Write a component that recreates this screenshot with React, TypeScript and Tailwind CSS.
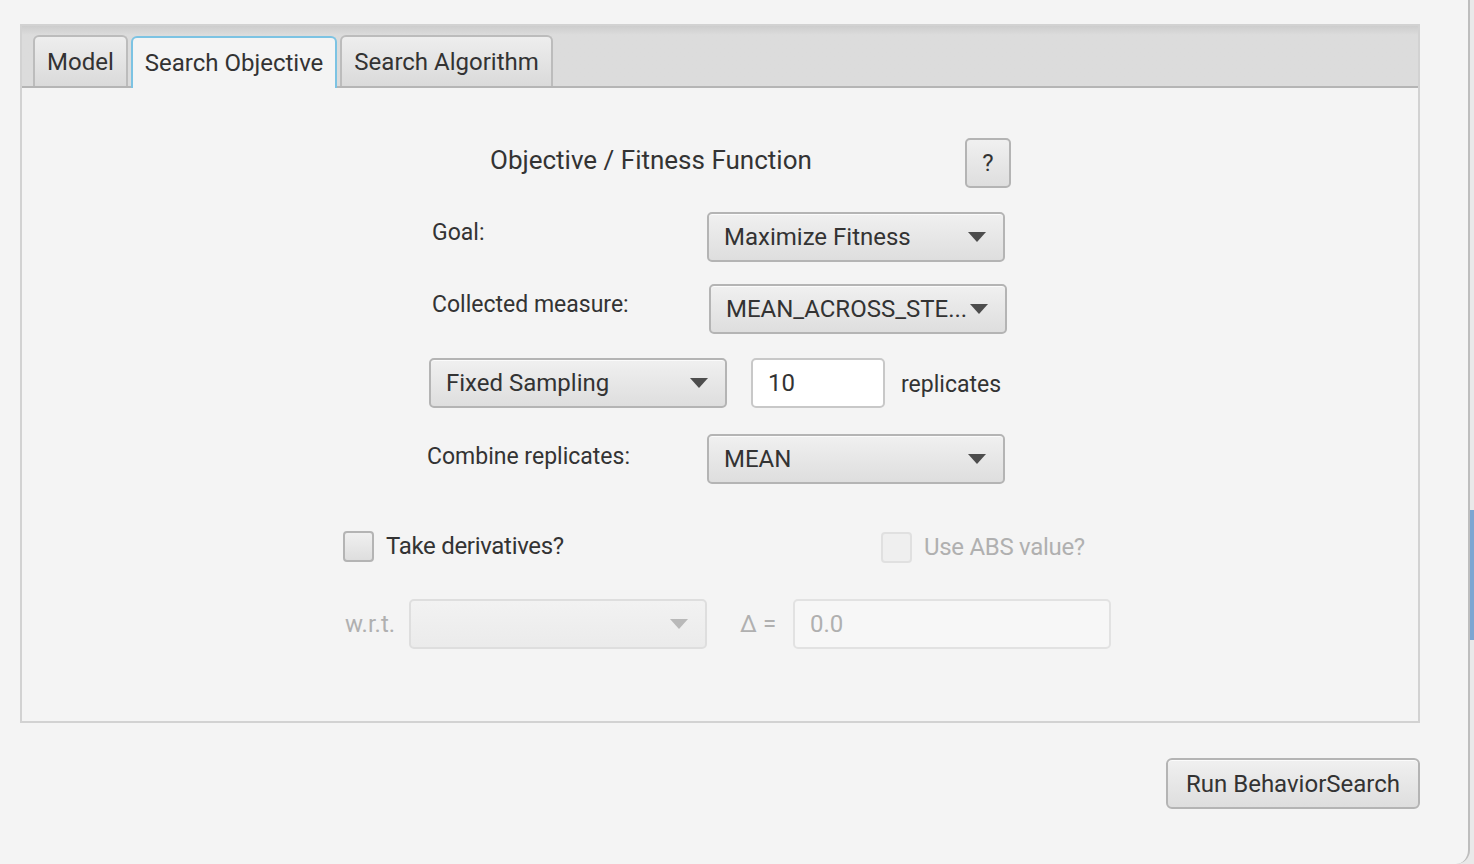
import React from "react";

const font = { fontFamily: "Roboto, 'Noto Sans', sans-serif" };

function Arrow({ disabled = false }: { disabled?: boolean }) {
  return (
    <svg width="18" height="10" viewBox="0 0 18 10" className="shrink-0">
      <path d="M0 0 L18 0 L9 10 Z" fill={disabled ? "#b9b9b9" : "#4d4d4d"} />
    </svg>
  );
}

function Combo({ label, w = "w-[298px]", disabled = false }: { label: string; w?: string; disabled?: boolean }) {
  return (
    <div
      className={`${w} h-[50px] shrink-0 flex items-center justify-between pl-[15px] pr-[17px] rounded-[5px] border-2 ${
        disabled
          ? "border-[#dedede] bg-gradient-to-b from-[#f2f2f2] to-[#ebebeb]"
          : "border-[#b4b4b4] bg-gradient-to-b from-[#f0f0f0] to-[#dedede] shadow-[inset_0_1px_0_#fbfbfb]"
      }`}
    >
      <span className="text-[24px] text-[#333] whitespace-nowrap">{label}</span>
      <Arrow disabled={disabled} />
    </div>
  );
}

function Checkbox({ label, disabled = false }: { label: string; disabled?: boolean }) {
  return (
    <div className="flex items-center gap-[12px]">
      <div
        className={`w-[31px] h-[31px] rounded-[4px] border-2 ${
          disabled ? "border-[#e0e0e0] bg-[#efefef]" : "border-[#b4b4b4] bg-gradient-to-b from-[#f0f0f0] to-[#dedede]"
        }`}
      />
      <span className={`text-[24px] tracking-[-0.3px] ${disabled ? "text-[#b0b0b0]" : "text-[#333]"}`}>{label}</span>
    </div>
  );
}

function Tab({ label, selected = false }: { label: string; selected?: boolean }) {
  return (
    <div
      className={`h-[51px] px-[12px] flex items-center rounded-t-[6px] border-2 border-b-0 text-[24px] text-[#333] ${
        selected
          ? "bg-[#f4f4f4] border-[#7cc3e3] relative top-[2px] h-[52px]"
          : "bg-gradient-to-b from-[#eeeeee] to-[#dadada] border-[#bcbcbc]"
      }`}
    >
      {label}
    </div>
  );
}

export default function App() {
  return (
    <div className="w-[1474px] h-[864px] bg-[#e9e9e9] flex overflow-hidden" style={font}>
      <div className="w-[1470px] h-[864px] shrink-0 bg-[#f4f4f4] border-r-2 border-[#bdbdbd] rounded-br-[14px] pt-[24px] pl-[20px]">
        <div className="w-[1400px] h-[699px] border-2 border-[#d2d2d2] flex flex-col">
          <div className="h-[62px] shrink-0 bg-gradient-to-b from-[#cdcdcd] via-[#dcdcdc] via-[15%] to-[#dcdcdc] border-b-2 border-[#b5b5b5] flex items-end pl-[11px] gap-[3px]">
            <Tab label="Model" />
            <Tab label="Search Objective" selected />
            <Tab label="Search Algorithm" />
          </div>

          <div className="flex-1 flex flex-col text-[#333]">
            <div className="mt-[50px] flex items-center h-[50px]">
              <div className="ml-[468px] w-[475px] text-[26px] -mt-[6px]">Objective / Fitness Function</div>
              <div className="w-[46px] h-[50px] rounded-[5px] border-2 border-[#b4b4b4] bg-gradient-to-b from-[#f0f0f0] to-[#dedede] flex items-center justify-center text-[24px]">
                ?
              </div>
            </div>

            <div className="mt-[24px] flex items-center">
              <div className="ml-[410px] w-[275px] text-[23px] -mt-[8px]">Goal:</div>
              <Combo label="Maximize Fitness" />
            </div>

            <div className="mt-[22px] flex items-center">
              <div className="ml-[410px] w-[277px] text-[23px] -mt-[8px]">Collected measure:</div>
              <Combo label="MEAN_ACROSS_STE..." />
            </div>

            <div className="mt-[24px] flex items-center">
              <div className="ml-[407px]">
                <Combo label="Fixed Sampling" />
              </div>
              <div className="ml-[24px] w-[134px] h-[50px] rounded-[5px] border-2 border-[#c8c8c8] bg-white flex items-center pl-[15px] text-[24px]">
                10
              </div>
              <div className="ml-[16px] text-[23px] mt-[5px]">replicates</div>
            </div>

            <div className="mt-[26px] flex items-center">
              <div className="ml-[405px] w-[280px] text-[23px] -mt-[4px]">Combine replicates:</div>
              <Combo label="MEAN" />
            </div>

            <div className="mt-[43px] flex items-center">
              <div className="ml-[321px] w-[538px]">
                <Checkbox label="Take derivatives?" />
              </div>
              <div className="mt-[2px]">
                <Checkbox label="Use ABS value?" disabled />
              </div>
            </div>

            <div className="mt-[34px] flex items-center">
              <div className="ml-[323px] w-[64px] text-[24px] text-[#b0b0b0]">w.r.t.</div>
              <Combo label="" disabled />
              <div className="ml-[33px] w-[53px] text-[24px] text-[#b0b0b0]">Δ =</div>
              <div className="w-[318px] h-[50px] rounded-[5px] border-2 border-[#e2e2e2] bg-[#f7f7f7] flex items-center pl-[15px] text-[24px] text-[#b0b0b0]">
                0.0
              </div>
            </div>
          </div>
        </div>

        <div className="w-[1400px] flex justify-end mt-[35px]">
          <div className="w-[254px] h-[51px] rounded-[6px] border-2 border-[#b4b4b4] bg-gradient-to-b from-[#f0f0f0] to-[#dedede] shadow-[inset_0_1px_0_#fbfbfb] flex items-center justify-center text-[24px] text-[#333]">
            Run BehaviorSearch
          </div>
        </div>
      </div>

      <div className="flex-1 flex flex-col">
        <div className="h-[510px]" />
        <div className="h-[130px] bg-[#7ea6d2]" />
      </div>
    </div>
  );
}
